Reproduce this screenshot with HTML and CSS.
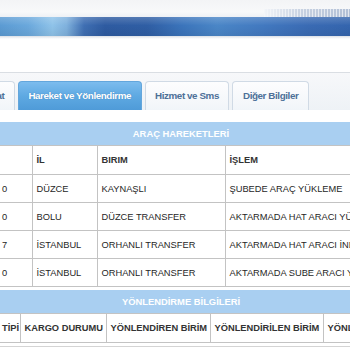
FILE: index.html
```html
<!DOCTYPE html>
<html lang="tr">
<head>
<meta charset="utf-8">
<title>Kargo Takip</title>
<link rel="stylesheet" href="styles.css">
</head>
<body>
<div class="page">
  <div class="banner">
    <div class="banner-top"><div class="stripes"></div></div>
    <div class="band"></div>
    <div class="band-shadow"></div>
  </div>
  <div class="gap"></div>
  <div class="tabbar">
    <div class="tab first">Fiyat</div>
    <div class="tab active">Hareket ve Yönlendirme</div>
    <div class="tab">Hizmet ve Sms</div>
    <div class="tab">Diğer Bilgiler</div>
  </div>
  <div class="content">
    <table class="grid moves">
      <colgroup><col class="c1"><col class="c2"><col class="c3"><col class="c4"></colgroup>
      <tr><th class="section" colspan="4">ARAÇ HAREKETLERİ</th></tr>
      <tr class="head"><td></td><td>İL</td><td>BIRIM</td><td>İŞLEM</td></tr>
      <tr><td>0</td><td>DÜZCE</td><td>KAYNAŞLI</td><td>ŞUBEDE ARAÇ YÜKLEME</td></tr>
      <tr><td>0</td><td>BOLU</td><td>DÜZCE TRANSFER</td><td>AKTARMADA HAT ARACI YÜKLEME</td></tr>
      <tr><td>7</td><td>İSTANBUL</td><td>ORHANLI TRANSFER</td><td>AKTARMADA HAT ARACI İNDİRME</td></tr>
      <tr><td>0</td><td>İSTANBUL</td><td>ORHANLI TRANSFER</td><td>AKTARMADA SUBE ARACI YÜKLEME</td></tr>
    </table>
    <table class="grid routes">
      <colgroup><col class="d1"><col class="d2"><col class="d3"><col class="d4"><col class="d5"></colgroup>
      <tr><th class="section" colspan="5">YÖNLENDİRME BİLGİLERİ</th></tr>
      <tr class="head"><td>TİPİ</td><td>KARGO DURUMU</td><td>YÖNLENDİREN BİRİM</td><td>YÖNLENDİRİLEN BİRİM</td><td>YÖNLENDİRME</td></tr>
    </table>
    <div class="next-row"></div>
  </div>
</div>
</body>
</html>
```
FILE: styles.css
```css
html, body {
  margin: 0;
  padding: 0;
  background: #ffffff;
}
.page {
  width: 350px;
  height: 350px;
  overflow: hidden;
  font-family: "Liberation Sans", Arial, sans-serif;
}
.banner-top {
  height: 17px;
  background: linear-gradient(180deg, #f3f4f6 0%, #f8f9fa 70%, #eef1f5 100%);
  display: flex;
  justify-content: flex-end;
  align-items: flex-end;
}
.stripes {
  width: 86px;
  height: 8px;
  background:
    linear-gradient(90deg, rgba(245,247,250,0.95) 0%, rgba(245,247,250,0.3) 45%, rgba(245,247,250,0) 100%),
    repeating-linear-gradient(90deg, #e2e7ef 0 1.5px, #b2c0d6 1.5px 3px);
}
.band {
  height: 19px;
  background:
    linear-gradient(180deg, rgba(255,255,255,0.18) 0%, rgba(255,255,255,0) 45%, rgba(0,0,0,0.06) 100%),
    linear-gradient(90deg, #5b9bd3 0%, #6aa8dc 8%, #8fc3e9 15%, #7fb1dd 19%, #3f6fb3 24%, #2e5ba1 30%, #2f5ea4 42%, #3b74bb 52%, #4a86c7 62%, #4279c0 75%, #3a6bb4 88%, #3465ae 100%);
}
.band-shadow {
  height: 3px;
  background: linear-gradient(180deg, #d9dee5 0%, #f2f4f7 60%, #ffffff 100%);
}
.gap {
  height: 33px;
}
.tabbar {
  border-top: 1px solid #dadee3;
  background: linear-gradient(180deg, #f7f8fa 0%, #eef2f6 100%);
  padding-top: 8px;
  display: flex;
  align-items: flex-end;
  gap: 3px;
}
.tab {
  height: 28px;
  line-height: 28px;
  padding: 0 9.5px;
  border: 1px solid #d0dae5;
  border-bottom: none;
  border-radius: 4px 4px 0 0;
  background: linear-gradient(180deg, #fdfdfe 0%, #f1f5f9 100%);
  color: #4d7098;
  font-size: 9.8px;
  font-weight: bold;
  letter-spacing: -0.4px;
  white-space: nowrap;
  flex: none;
}
.tab.first {
  margin-left: -27px;
}
.tab.active {
  border-color: #63a6dc;
  background: linear-gradient(180deg, #7cbcee 0%, #5ea9e2 50%, #4f9bd8 100%);
  color: #ffffff;
  text-shadow: 0 0 1px rgba(30,80,140,0.5);
}
.content {
  padding-top: 12px;
}
.grid {
  border-collapse: collapse;
  table-layout: fixed;
  width: 362px;
  font-size: 9.3px;
  color: #262626;
}
.grid td {
  height: 27px;
  padding: 0 4px;
  border: 1px solid #c3c3c3;
  white-space: nowrap;
  overflow: hidden;
  text-overflow: clip;
  vertical-align: middle;
}
.grid td:first-child {
  border-left: none;
  padding-left: 2px;
}
.grid .section {
  height: 23px;
  padding: 0;
  background: #a9cff1;
  color: #ffffff;
  font-size: 9.4px;
  font-weight: bold;
  text-align: center;
  border: none;
}
.grid .head td {
  font-weight: bold;
  color: #333333;
  height: 28px;
}
.c1 { width: 32px; }
.c2 { width: 65px; }
.c3 { width: 128px; }
.c4 { width: 137px; }
.d1 { width: 20px; }
.d2 { width: 86px; }
.d3 { width: 104px; }
.d4 { width: 113px; }
.d5 { width: 39px; }
.routes {
  margin-top: 3px;
}
.next-row {
  margin-top: 3px;
  border-top: 1px solid #d4d4d4;
  height: 20px;
}
```
